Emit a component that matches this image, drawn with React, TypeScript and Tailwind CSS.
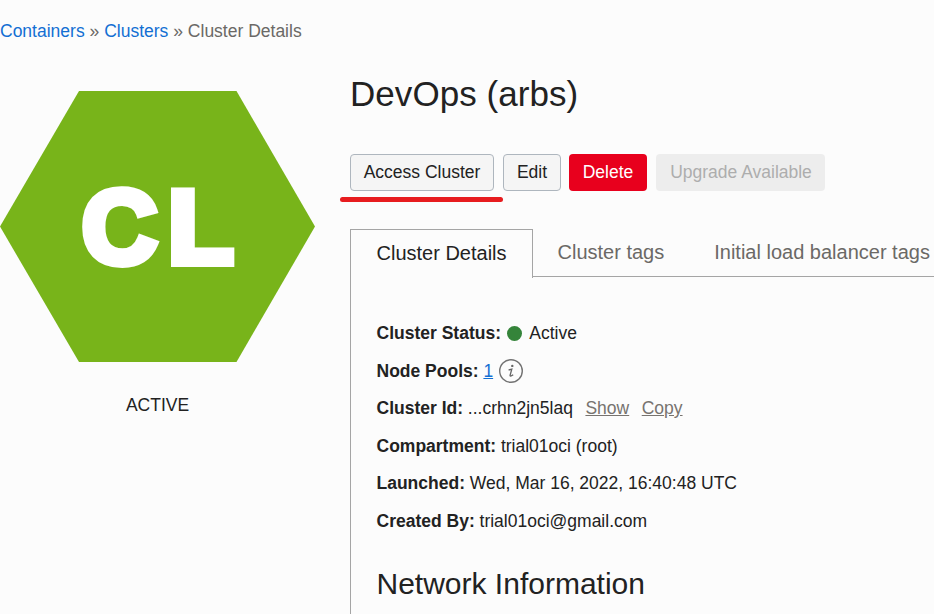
import type { ReactNode } from "react";

function Breadcrumbs() {
  return (
    <nav className="flex h-[62px] items-center gap-[4.9px] text-[17.5px] text-[#6b6966]">
      <a className="text-[#136fd3]">Containers</a>
      <span>»</span>
      <a className="text-[#136fd3]">Clusters</a>
      <span>»</span>
      <span>Cluster Details</span>
    </nav>
  );
}

function StatusBadge() {
  return (
    <aside className="w-[350px] shrink-0 pt-[29px]">
      <svg width="315" height="271" viewBox="0 0 315 271" className="block">
        <polygon points="79,0 236.5,0 315,135.5 236.5,271 79,271 0,135.5" fill="#78b41a" />
        <g
          fill="#fff"
          stroke="#fff"
          strokeWidth="8"
          strokeLinejoin="miter"
          fontFamily="'Liberation Sans', Arial, sans-serif"
          fontWeight="700"
          fontSize="103"
        >
          <text transform="translate(82 172.3) scale(1.01 1)">C</text>
          <text transform="translate(168 172) scale(1.04 1)">L</text>
        </g>
      </svg>
      <div className="mt-[31px] w-[315px] text-center text-[17.5px] leading-6">ACTIVE</div>
    </aside>
  );
}

function Actions() {
  return (
    <div className="mt-[39px] flex h-[37px] text-[17.5px]">
      <button className="mr-[9px] w-[144px] rounded-[4px] border border-[#aeb6be] bg-[#f5f5f5]">Access Cluster</button>
      <button className="mr-[8px] w-[58px] rounded-[4px] border border-[#aeb6be] bg-[#f5f5f5]">Edit</button>
      <button className="mr-[9px] w-[78px] rounded-[4px] bg-[#e8001d] text-white">Delete</button>
      <button className="w-[169px] rounded-[4px] bg-[#ededed] pl-px text-[#adadad]">Upgrade Available</button>
    </div>
  );
}

function Tabs() {
  return (
    <div className="mt-[27px] flex h-[48px] text-[20px] leading-6 whitespace-nowrap text-[#6b6966]">
      <div className="h-[49px] w-[183px] shrink-0 border border-b-0 border-[#a5a5a5] pt-[11px] pl-[25.5px] text-[#222]">
        Cluster Details
      </div>
      <div className="flex flex-1 gap-[50px] border-b border-[#a5a5a5] pt-[11px] pl-[24.5px]">
        <span>Cluster tags</span>
        <span>Initial load balancer tags</span>
      </div>
    </div>
  );
}

function Row({ label, children }: { label: string; children: ReactNode }) {
  return (
    <div className="flex h-[37.5px] items-center">
      <b className="mr-[4.8px]">{label}</b>
      {children}
    </div>
  );
}

function InfoIcon() {
  return (
    <svg width="26" height="26" viewBox="0 0 26 26" className="mt-px ml-[4.5px]">
      <circle cx="13" cy="13" r="11.3" fill="none" stroke="#737373" strokeWidth="1.4" />
      <circle cx="14.3" cy="7.9" r="1.2" fill="#666" />
      <path d="M10.6 12 L13.8 11.2 L12.1 17.2 Q11.7 19.2 15.2 16.8" fill="none" stroke="#666" strokeWidth="1.3" />
    </svg>
  );
}

export default function App() {
  return (
    <div className="h-[614px] w-[934px] overflow-hidden bg-[#fcfcfc] font-['Liberation_Sans',Arial,sans-serif] text-[#222]">
      <Breadcrumbs />
      <div className="flex">
        <StatusBadge />
        <main className="min-w-0 flex-1">
          <h1 className="mt-[11px] h-[42px] text-[35px] leading-[42px] tracking-[0.05px]">DevOps (arbs)</h1>
          <Actions />
          <div className="mt-[6px] -ml-[10px] h-[5px] w-[163px] rounded-full bg-[#e71c1f]" />
          <Tabs />
          <section className="h-[400px] border-l border-[#a5a5a5] pt-[37.5px] pl-[25.5px] text-[17.5px]">
            <Row label="Cluster Status:">
              <i className="mr-[7px] ml-px size-[15.5px] rounded-full bg-[#35843a]" />
              <span>Active</span>
            </Row>
            <Row label="Node Pools:">
              <a className="text-[#136fd3] underline">1</a>
              <InfoIcon />
            </Row>
            <Row label="Cluster Id:">
              <span>...crhn2jn5laq</span>
              <a className="ml-[12.5px] text-[#77736f] underline">Show</a>
              <a className="ml-[12.5px] text-[#77736f] underline">Copy</a>
            </Row>
            <Row label="Compartment:"><span>trial01oci (root)</span></Row>
            <Row label="Launched:"><span>Wed, Mar 16, 2022, 16:40:48 UTC</span></Row>
            <Row label="Created By:"><span>trial01oci@gmail.com</span></Row>
            <h2 className="mt-[26.5px] text-[30px] leading-9">Network Information</h2>
          </section>
        </main>
      </div>
    </div>
  );
}
